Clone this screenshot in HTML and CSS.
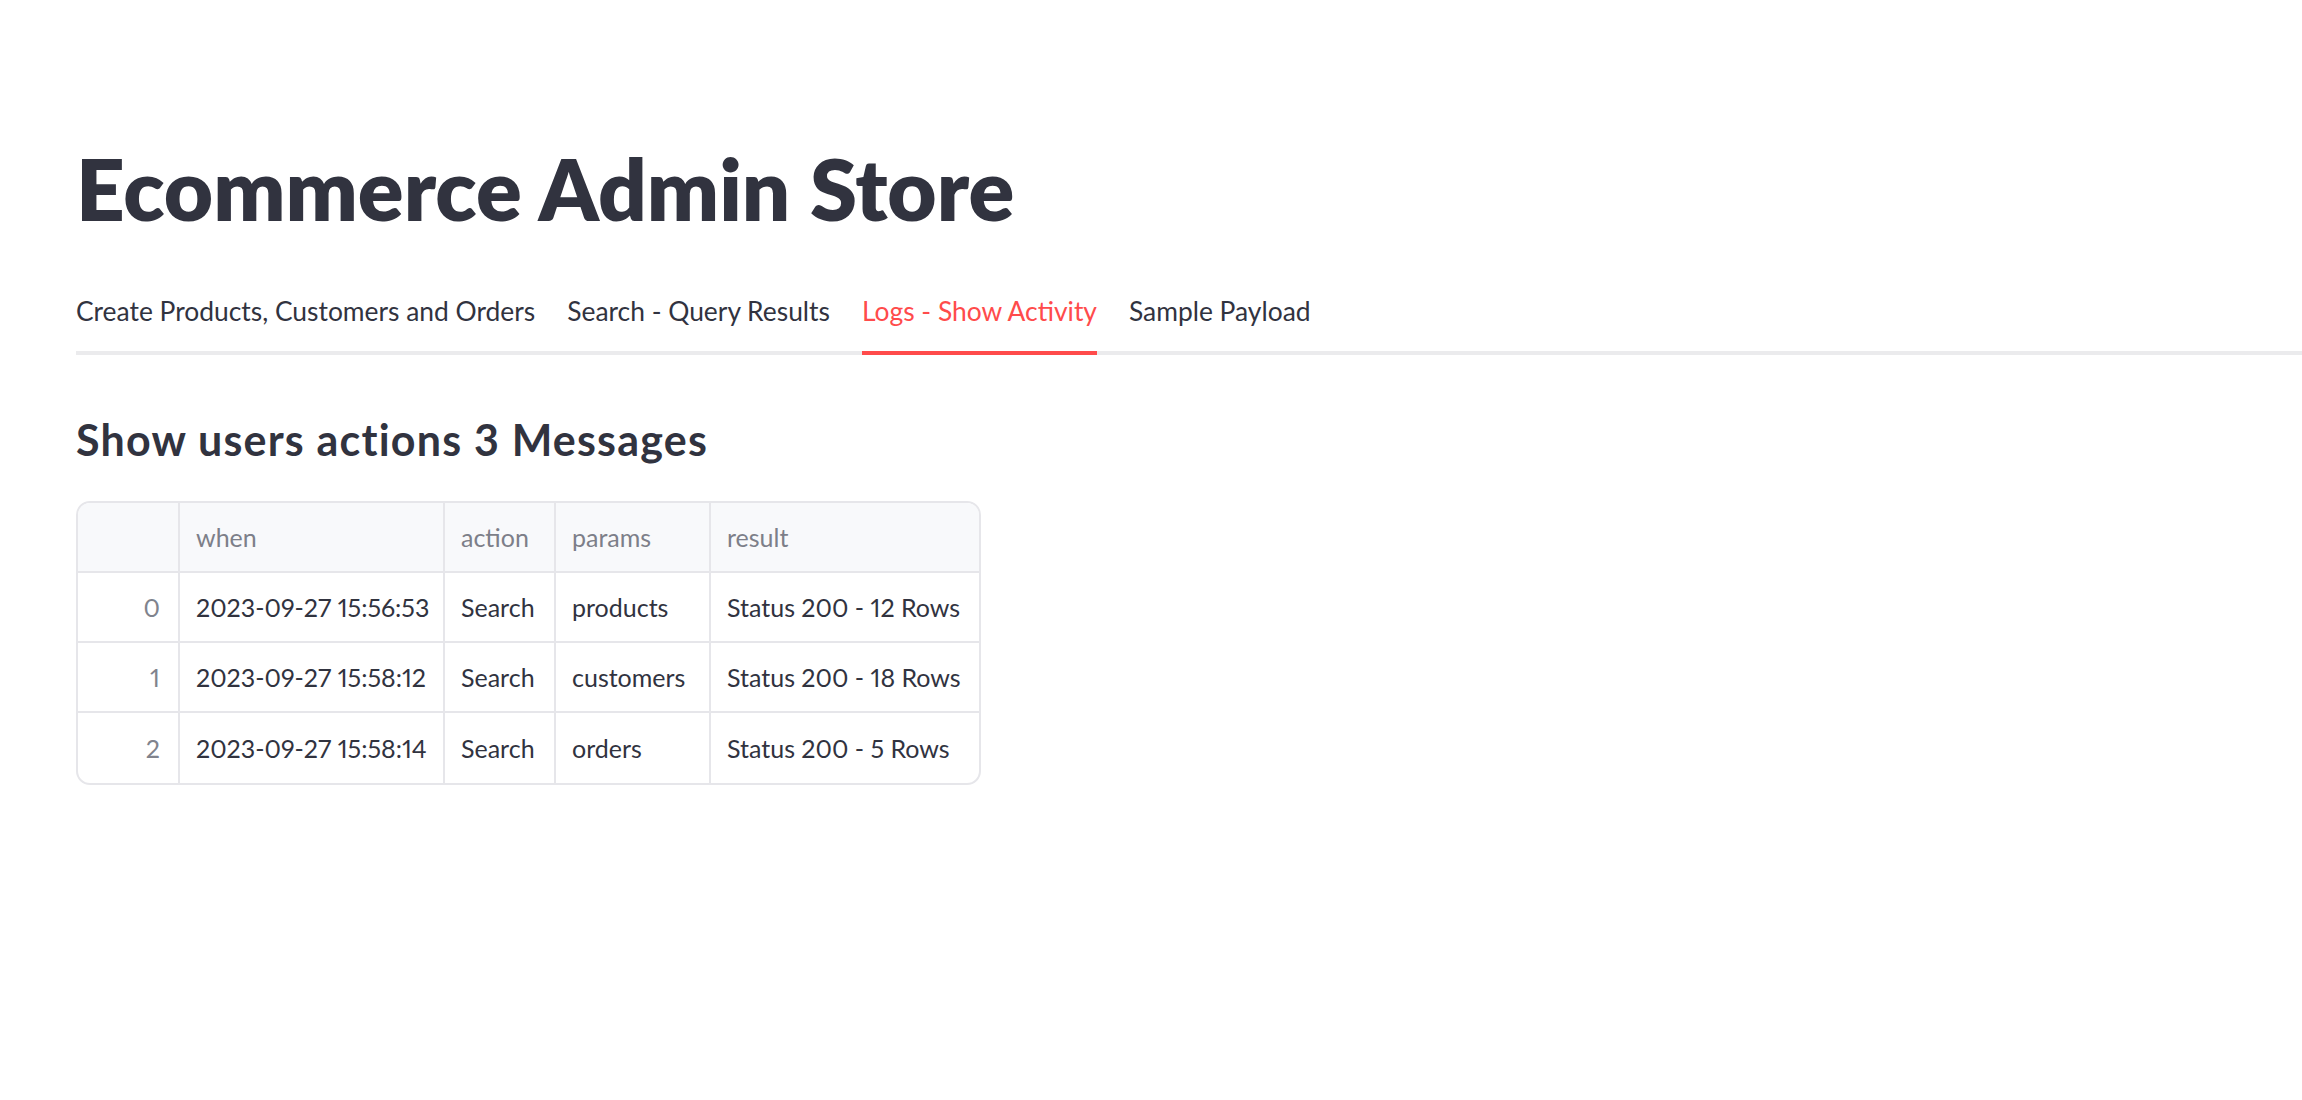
FILE: index.html
```html
<!DOCTYPE html>
<html lang="en">
<head>
<meta charset="utf-8">
<title>Ecommerce Admin Store</title>
<link rel="stylesheet" href="styles.css">
</head>
<body>
<main class="main">
  <h1 class="title">Ecommerce Admin Store</h1>
  <nav class="tabs">
    <div class="tab">Create Products, Customers and Orders</div>
    <div class="tab">Search - Query Results</div>
    <div class="tab active">Logs - Show Activity</div>
    <div class="tab">Sample Payload</div>
  </nav>
  <h3 class="subheader">Show users actions 3 Messages</h3>
  <div class="grid">
    <div class="cell head idx"></div>
    <div class="cell head">when</div>
    <div class="cell head">action</div>
    <div class="cell head">params</div>
    <div class="cell head last">result</div>

    <div class="cell idx">0</div>
    <div class="cell">2023-09-27 15:56:53</div>
    <div class="cell">Search</div>
    <div class="cell">products</div>
    <div class="cell last">Status 200 - 12 Rows</div>

    <div class="cell idx">1</div>
    <div class="cell">2023-09-27 15:58:12</div>
    <div class="cell">Search</div>
    <div class="cell">customers</div>
    <div class="cell last">Status 200 - 18 Rows</div>

    <div class="cell idx bottom">2</div>
    <div class="cell bottom">2023-09-27 15:58:14</div>
    <div class="cell bottom">Search</div>
    <div class="cell bottom">orders</div>
    <div class="cell last bottom">Status 200 - 5 Rows</div>
  </div>
</main>
</body>
</html>
```
FILE: styles.css
```css
* { box-sizing: border-box; }
html, body { margin: 0; padding: 0; background: #ffffff; }
body {
  font-family: "Lato", "Source Sans Pro", sans-serif;
  color: #31333f;
  font-variant-numeric: proportional-nums;
}
.main {
  padding: 137px 0 0 76px;
}
.title {
  margin: 0;
  font-size: 85px;
  font-weight: 800;
  line-height: 1.2;
}
.tabs {
  margin-top: 32px;
  display: flex;
  gap: 32px;
  border-bottom: 4px solid #ebebed;
}
.tab {
  height: 84px;
  margin-bottom: -4px;
  padding-top: 2px;
  display: flex;
  align-items: center;
  font-size: 26.4px;
  line-height: 1.2;
  border-bottom: 4px solid transparent;
  white-space: nowrap;
}
.tab.active {
  color: #ff4b4b;
  border-bottom-color: #ff4b4b;
}
.subheader {
  margin: 59px 0 0 0;
  font-size: 43px;
  font-weight: 700;
  line-height: 1.2;
  letter-spacing: 1.2px;
}
.grid {
  margin-top: 35px;
  width: 905px;
  display: grid;
  grid-template-columns: 102px 265px 111px 155px 268px;
  grid-auto-rows: 70px;
  border: 2px solid #e6e6ea;
  border-radius: 14px;
  overflow: hidden;
}
.cell {
  display: flex;
  align-items: center;
  padding: 0 16px;
  font-size: 25px;
  border-right: 2px solid #e6e6ea;
  border-bottom: 2px solid #e6e6ea;
  white-space: nowrap;
}
.cell.last { border-right: none; }
.cell.bottom { border-bottom: none; }
.cell.head {
  background: #f8f9fb;
  color: #7d7f89;
}
.cell.idx {
  justify-content: flex-end;
  padding-right: 18px;
  color: #80838d;
}
```
